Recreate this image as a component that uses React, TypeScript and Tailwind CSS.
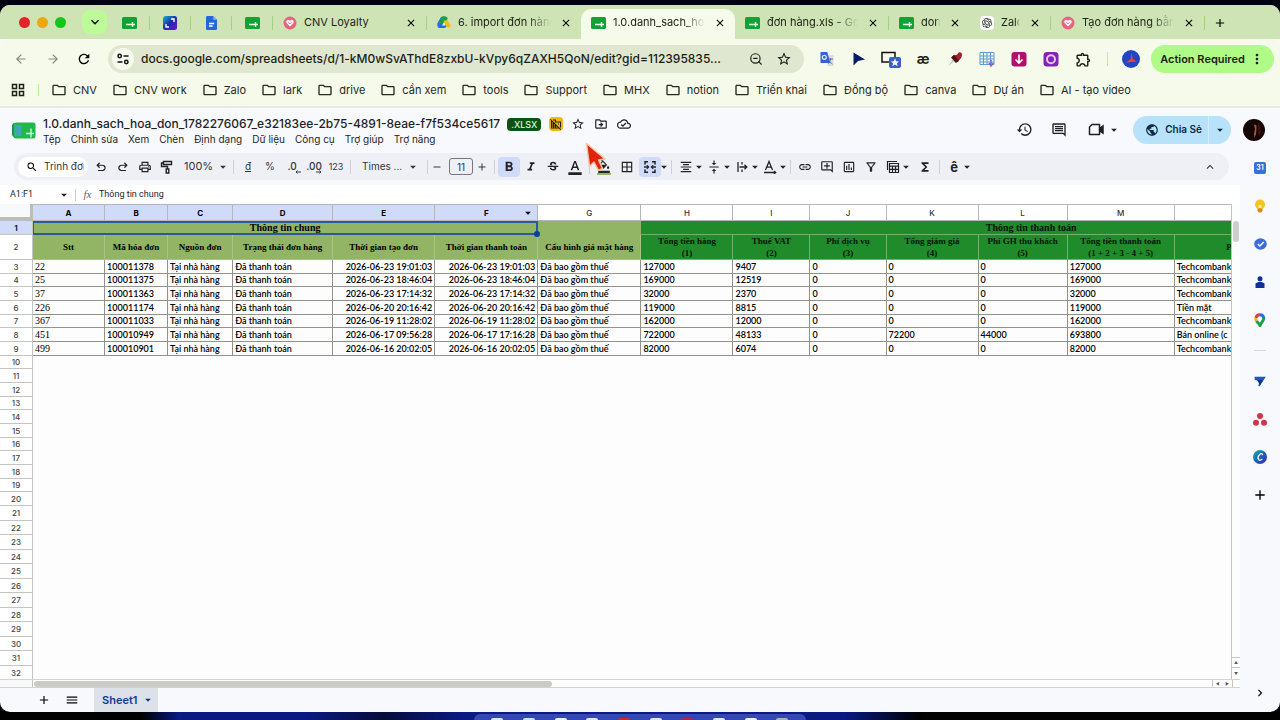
import type { ReactNode } from 'react';
import {
  MdAdd,
  MdArrowDropDown,
  MdBorderAll,
  MdClose,
  MdDomainDisabled,
  MdFormatAlignCenter,
  MdFormatBold,
  MdFormatColorFill,
  MdFormatColorText,
  MdFormatItalic,
  MdFunctions,
  MdHistory,
  MdKeyboardArrowDown,
  MdKeyboardArrowRight,
  MdKeyboardArrowUp,
  MdLink,
  MdMenu,
  MdMoreVert,
  MdOutlineAddComment,
  MdOutlineCloudDone,
  MdOutlineComment,
  MdOutlineDriveFileMove,
  MdOutlineExtension,
  MdOutlineFilterAlt,
  MdOutlineFolder,
  MdOutlineInsertChart,
  MdOutlinePrint,
  MdPublic,
  MdRefresh,
  MdRemove,
  MdSearch,
  MdStarBorder,
  MdStrikethroughS,
  MdVerticalAlignCenter,
} from 'react-icons/md';
import { ArrowLeft, ArrowRight, ZoomOut } from 'lucide-react';
import { SiOpenai } from 'react-icons/si';

const bookmarks = [
  'CNV',
  'CNV work',
  'Zalo',
  'lark',
  'drive',
  'cần xem',
  'tools',
  'Support',
  'MHX',
  'notion',
  'Triển khai',
  'Đồng bộ',
  'canva',
  'Dự án',
  'AI - tạo video',
];

const menus = ['Tệp', 'Chỉnh sửa', 'Xem', 'Chèn', 'Định dạng', 'Dữ liệu', 'Công cụ', 'Trợ giúp', 'Trợ năng'];

const columns = [
  { id: 'A', width: 72, title: 'Stt' },
  { id: 'B', width: 63, title: 'Mã hóa đơn' },
  { id: 'C', width: 65, title: 'Nguồn đơn' },
  { id: 'D', width: 100, title: 'Trạng thái đơn hàng' },
  { id: 'E', width: 102, title: 'Thời gian tạo đơn' },
  { id: 'F', width: 103, title: 'Thời gian thanh toán' },
  { id: 'G', width: 103, title: 'Cấu hình giá mặt hàng' },
  { id: 'H', width: 92, title: 'Tổng tiền hàng', note: '(1)' },
  { id: 'I', width: 77, title: 'Thuế VAT', note: '(2)' },
  { id: 'J', width: 76, title: 'Phí dịch vụ', note: '(3)' },
  { id: 'K', width: 92, title: 'Tổng giảm giá', note: '(4)' },
  { id: 'L', width: 89, title: 'Phí GH thu khách', note: '(5)' },
  { id: 'M', width: 107, title: 'Tổng tiền thanh toán', note: '(1 + 2 + 3 - 4 + 5)' },
  { id: 'N', width: 198, title: 'Phương thức thanh toán' },
  { id: 'O', width: 48, title: '' },
];

const paid = 'Đã thanh toán';
const shop = 'Tại nhà hàng';
const taxed = 'Đã bao gồm thuế';

const records = [
  ['22', '100011378', shop, paid, '2026-06-23 19:01:03', '2026-06-23 19:01:03', taxed, '127000', '9407', '0', '0', '0', '127000', 'Techcombank'],
  ['25', '100011375', shop, paid, '2026-06-23 18:46:04', '2026-06-23 18:46:04', taxed, '169000', '12519', '0', '0', '0', '169000', 'Techcombank'],
  ['37', '100011363', shop, paid, '2026-06-23 17:14:32', '2026-06-23 17:14:32', taxed, '32000', '2370', '0', '0', '0', '32000', 'Techcombank'],
  ['226', '100011174', shop, paid, '2026-06-20 20:16:42', '2026-06-20 20:16:42', taxed, '119000', '8815', '0', '0', '0', '119000', 'Tiền mặt'],
  ['367', '100011033', shop, paid, '2026-06-19 11:28:02', '2026-06-19 11:28:02', taxed, '162000', '12000', '0', '0', '0', '162000', 'Techcombank'],
  ['451', '100010949', shop, paid, '2026-06-17 09:56:28', '2026-06-17 17:16:28', taxed, '722000', '48133', '0', '72200', '44000', '693800', 'Bán online (c'],
  ['499', '100010901', shop, paid, '2026-06-16 20:02:05', '2026-06-16 20:02:05', taxed, '82000', '6074', '0', '0', '0', '82000', 'Techcombank'],
];

const heightOf = (row: number) => {
  if (row > 20) return row % 2 ? 15 : 14;
  return row % 3 === 1 ? 13 : 14;
};

const emptyRows = Array.from({ length: 23 }, (_, i) => i + 10);

const dockItems = [
  'bg-[#dfe6f5]',
  'bg-[#cfe0ff]',
  'bg-[#e8edf8]',
  'bg-[#dfe6f5]',
  'bg-[#c4282f]',
  'bg-[#dfe6f5]',
  'bg-[#ac2346]',
  'bg-[#dfe6f5]',
  'bg-[#e8edf8]',
  'bg-[#a9aeb8]',
];

const SheetsIcon = () => (
  <svg viewBox="0 0 15 12" className="h-3 w-[15px] shrink-0">
    <rect width="15" height="12" rx="1.5" fill="#0fa336" />
    <path d="M4 7.500h9M10.500 5v5" stroke="#e8ffe9" strokeWidth="1.4" />
  </svg>
);

const HeartIcon = () => (
  <svg viewBox="0 0 14 14" className="size-3.5 shrink-0">
    <circle cx="7" cy="7" r="6.5" fill="#e5657f" />
    <path d="M7 10.5 3.8 7.2a1.9 1.9 0 0 1 2.7-2.7l.5.5.5-.5a1.9 1.9 0 0 1 2.7 2.7z" fill="#fff" />
    <path d="m5.4 6.4 1.6 1.4 1.6-1.4" stroke="#e5657f" fill="none" />
  </svg>
);

const DriveIcon = () => (
  <svg viewBox="0 0 14 13" className="h-[13px] w-3.5 shrink-0">
    <path d="M5 3.200 2.300 8" stroke="#2c6be0" strokeWidth="4" strokeLinecap="round" />
    <path d="M7 3 4.500 7" stroke="#16a04a" strokeWidth="5" strokeLinecap="round" />
    <path d="m8.500 4.500 3 5" stroke="#f9bc15" strokeWidth="4" strokeLinecap="round" />
    <path d="M2.400 10h5" stroke="#2c6be0" strokeWidth="4" strokeLinecap="round" />
    <path d="M5.500 2.500h3" stroke="#16a04a" strokeWidth="4" strokeLinecap="round" />
    <path d="m7 6 2 3.500H5z" fill="#e9f3da" />
  </svg>
);

const ResizeIcon = () => (
  <svg viewBox="0 0 14 14" className="size-3.5 shrink-0">
    <defs>
      <linearGradient id="resize" x1="0" y1="0" x2="1" y2="1">
        <stop offset="0" stopColor="#19b8c9" />
        <stop offset=".5" stopColor="#1b2bb0" />
        <stop offset="1" stopColor="#7a12c9" />
      </linearGradient>
    </defs>
    <rect width="14" height="14" rx="2.5" fill="url(#resize)" />
    <path d="M8 3h3v3M6 11H3V8" stroke="#fff" strokeWidth="1.4" fill="none" />
  </svg>
);

const DocsIcon = () => (
  <svg viewBox="0 0 11 14" className="h-3.5 w-[11px] shrink-0">
    <path d="M1.300 0h6L11 3.700v9a1.300 1.300 0 0 1-1.300 1.300H1.300A1.300 1.300 0 0 1 0 12.700V1.300A1.300 1.300 0 0 1 1.300 0z" fill="#2467dc" />
    <path d="M7.300 0 11 3.700H7.300z" fill="#8db8f8" />
    <path d="M3 7.500h5.200M3 10h3.600" stroke="#fff" strokeWidth="1.300" />
  </svg>
);

const Divider = () => <span className="h-3.5 w-px shrink-0 bg-[#a3d284]" />;

const PinnedTab = ({ label, children }: { label: string; children: ReactNode }) => (
  <div className="flex h-full shrink-0 items-center pb-[3px]">
    <button type="button" aria-label={label} className="flex w-10 items-center justify-center">
      {children}
    </button>
    <Divider />
  </div>
);

type TabProps = { icon: ReactNode; title: string; size?: 'full' | 'small'; active?: boolean; divider?: boolean };

const Tab = ({ icon, title, size = 'full', active = false, divider = true }: TabProps) => (
  <div
    className={`flex h-full min-w-0 items-center pb-[3px] ${size === 'full' ? 'basis-[154px]' : 'basis-[81px]'} ${
      active ? 'rounded-t-[10px] bg-[#f5faea]' : ''
    }`}
  >
    <button type="button" className="flex h-full min-w-0 flex-1 items-center gap-[7px] pl-2.5 text-left">
      {icon}
      <span
        className={`min-w-0 flex-1 overflow-hidden whitespace-nowrap ${
          title === 'CNV Loyalty' ? '' : 'mask-r-from-75% mask-r-to-100%'
        }`}
      >
        {title}
      </span>
    </button>
    <button type="button" aria-label={`Close ${title}`} className="flex w-[30px] shrink-0 items-center justify-center text-black">
      <MdClose className="size-3" />
    </button>
    {divider && <Divider />}
  </div>
);

const TabStrip = () => (
  <div className="flex h-[34px] items-center bg-[#cfe4b5] pt-1 text-[11px] text-[#20251a]">
    <div className="-mt-1 flex items-center gap-[7px] pl-[19px]">
      <span className="size-[11px] rounded-full bg-[#e5232b]" />
      <span className="size-[11px] rounded-full bg-[#eaa90d]" />
      <span className="size-[11px] rounded-full bg-[#12c718]" />
    </div>
    <button
      type="button"
      aria-label="Search tabs"
      className="-mt-1 mr-0.5 ml-4 flex h-6 w-[25px] items-center justify-center rounded-lg bg-[#bdfb98] text-black"
    >
      <MdKeyboardArrowDown className="size-4" />
    </button>
    <div className="flex h-full min-w-0 flex-1 items-center">
      <PinnedTab label="Sheets"><SheetsIcon /></PinnedTab>
      <PinnedTab label="Resize"><ResizeIcon /></PinnedTab>
      <PinnedTab label="Docs"><DocsIcon /></PinnedTab>
      <PinnedTab label="Sheets 2"><SheetsIcon /></PinnedTab>
      <Tab icon={<HeartIcon />} title="CNV Loyalty" />
      <Tab icon={<DriveIcon />} title="6. import đơn hàng" divider={false} />
      <Tab icon={<SheetsIcon />} title="1.0.danh_sach_hoa_" active divider={false} />
      <Tab icon={<SheetsIcon />} title="đơn hàng.xls - Goog" />
      <Tab icon={<SheetsIcon />} title="don" size="small" divider={false} />
      <Tab
        icon={
          <span className="flex size-3.5 shrink-0 items-center justify-center rounded-sm bg-white">
            <SiOpenai className="size-2.5" />
          </span>
        }
        title="Zalo"
        size="small"
      />
      <Tab icon={<HeartIcon />} title="Tạo đơn hàng bằng" />
      <button type="button" aria-label="New tab" className="flex w-[30px] items-center justify-center pb-[3px] text-black">
        <MdAdd className="size-3.5" />
      </button>
    </div>
  </div>
);

const ExtButton = ({ label, children }: { label: string; children: ReactNode }) => (
  <button type="button" aria-label={label} className="flex w-8 shrink-0 items-center justify-center">
    {children}
  </button>
);

const AddressBar = () => (
  <div className="flex h-10 items-center pr-1.5 text-[#1b1f16]">
    <div className="flex w-[108px] items-center pl-3">
      <button type="button" aria-label="Back" className="flex w-8 pl-0.5 text-[#85897a]"><ArrowLeft className="size-3.5" /></button>
      <button type="button" aria-label="Forward" className="flex w-8 pl-0.5 text-[#85897a]"><ArrowRight className="size-3.5" /></button>
      <button type="button" aria-label="Reload" className="flex text-black"><MdRefresh className="size-4" /></button>
    </div>
    <div className="flex h-7 min-w-0 flex-1 items-center rounded-full bg-[#dfe7d0] pl-1">
      <button type="button" aria-label="Site information" className="flex size-[22px] shrink-0 items-center justify-center rounded-full bg-[#f7fbee]">
        <svg viewBox="0 0 12 12" className="size-3" fill="none" stroke="#111" strokeWidth="1.500">
          <circle cx="2.700" cy="3" r="1.700" />
          <path d="M6.500 3h5M.5 9h5" />
          <circle cx="9.300" cy="9" r="1.700" />
        </svg>
      </button>
      <input
        aria-label="Address"
        readOnly
        value="docs.google.com/spreadsheets/d/1-kM0wSvAThdE8zxbU-kVpy6qZAXH5QoN/edit?gid=112395835..."
        className="min-w-0 flex-1 bg-transparent pl-[7px] text-xs font-medium text-ellipsis outline-none"
      />
      <button type="button" aria-label="Zoom" className="flex w-7 justify-center"><ZoomOut className="size-3.5" /></button>
      <button type="button" aria-label="Bookmark" className="mr-1.5 flex w-7 justify-center"><MdStarBorder className="size-4" /></button>
    </div>
    <div className="flex items-center pl-[7px]">
      <ExtButton label="Translate">
        <svg viewBox="0 0 16 16" className="size-4">
          <path d="M6 4h8.500v11H9z" fill="#d9dee5" />
          <path d="M9 8h5M11.500 7v1c0 2-1 3.500-2.500 4.500M10 10c1 1.500 2 2 3.500 3" stroke="#6c7480" fill="none" />
          <path d="M1.500 1h6.800l3 11H1.500z" fill="#3262cf" />
          <circle cx="5.300" cy="6.300" r="2" fill="none" stroke="#dfeaff" strokeWidth="1.200" />
        </svg>
      </ExtButton>
      <ExtButton label="Pointer">
        <svg viewBox="0 0 12 14" className="h-3.5 w-3"><path d="M.5.5 12 7.500 5 9 .5 13.500z" fill="#0c1b66" /></svg>
      </ExtButton>
      <ExtButton label="Window bookmark">
        <svg viewBox="0 0 20 18" className="h-[18px] w-5">
          <rect x="1" y="2.500" width="13" height="9.500" fill="none" stroke="#111" strokeWidth="1.500" />
          <rect x="8" y="7" width="12" height="11" rx="2" fill="#3760cb" />
          <path d="m14 8.500 1.200 2.700 2.900.2-2.200 1.900.7 2.900-2.600-1.600-2.600 1.600.7-2.900-2.200-1.900 2.900-.2z" fill="#fff" />
        </svg>
      </ExtButton>
      <ExtButton label="Dictionary"><span className="text-sm leading-4 font-bold">æ</span></ExtButton>
      <ExtButton label="Rocket">
        <svg viewBox="0 0 16 16" className="size-4">
          <path d="M1 15 7 7l2 2z" fill="#c9c3b8" />
          <path d="M5 6c2-3.500 5-1 5.500-3 1-2.500 5-2.500 4.500 1.500-.3 3-4 6-6.500 7z" fill="#a91f2b" />
          <path d="M4 6.500 7 4l5 6-3 2z" fill="#4a1617" />
        </svg>
      </ExtButton>
      <ExtButton label="Table capture">
        <svg viewBox="0 0 16 16" className="size-4" fill="none" stroke="#5a9bd5">
          <path d="M1 1.500h14v12H1zM1 5h14M1 8h14M1 11h14M4.500 1v13M8 1v13M11.500 1v13" />
          <path d="M12 9v5m-2-2 2 3 2.500-3" stroke="#8a62c9" strokeWidth="1.500" />
        </svg>
      </ExtButton>
      <ExtButton label="Downloader">
        <svg viewBox="0 0 16 16" className="size-4">
          <rect x=".5" y="1" width="15" height="14.500" rx="3" fill="#b0106a" />
          <path d="M8 3.500v8M4.500 8.500 8 12l3.500-3.500" stroke="#fff" strokeWidth="1.600" fill="none" />
        </svg>
      </ExtButton>
      <ExtButton label="Recorder">
        <svg viewBox="0 0 16 16" className="size-4">
          <rect x=".5" y="1" width="15" height="14.500" rx="3.500" fill="#8322b5" />
          <circle cx="8" cy="8.200" r="4" fill="none" stroke="#e6c4f3" strokeWidth="2" />
        </svg>
      </ExtButton>
      <ExtButton label="Extensions"><MdOutlineExtension className="size-[17px]" /></ExtButton>
      <span className="mx-2 h-3.5 w-px bg-[#b9eda0]" />
      <button type="button" aria-label="Profile" className="mr-[11px] ml-1.5">
        <svg viewBox="0 0 18 18" className="size-[18px]">
          <circle cx="9" cy="9" r="9" fill="#2145c7" />
          <path d="m9.500 3 1.500 6 4 2.500-5 .5-6 .5 4.500-3.500z" fill="#e5413d" />
        </svg>
      </button>
      <button type="button" className="flex h-7 w-[123px] items-center justify-center gap-1 rounded-full bg-[#b0fb87] text-[11px] font-semibold">
        Action Required
        <MdMoreVert className="size-4" />
      </button>
    </div>
  </div>
);

const Bookmarks = () => (
  <nav aria-label="Bookmarks" className="flex h-[29px] items-center border-b-2 border-[#e6ebd9] pb-[5px] pl-[11px] text-[11px] text-[#24281d]">
    <button type="button" aria-label="All apps" className="mr-[13px] flex">
      <svg viewBox="0 0 14 14" className="size-3.5" fill="none" stroke="#1d2116" strokeWidth="1.500">
        <path d="M1.500 1.500h4v4h-4zM8.500 1.500h4v4h-4zM1.500 8.500h4v4h-4zM8.500 8.500h4v4h-4z" />
      </svg>
    </button>
    <span className="mr-3 h-3 w-px bg-[#b9eda0]" />
    <div className="flex min-w-0 gap-[15px] overflow-hidden whitespace-nowrap">
      {bookmarks.map((name) => (
        <a key={name} href="#" className="flex items-center gap-1.5">
          <MdOutlineFolder className="size-4" />
          {name}
        </a>
      ))}
    </div>
  </nav>
);

const DocHeader = () => (
  <header className="flex h-[45px] items-center pl-3 text-[#1f1f1f]">
    <a href="#" aria-label="Sheets home" className="shrink-0">
      <svg viewBox="0 0 24 17" className="h-[17px] w-6">
        <rect x="0" y="1" width="9" height="14" rx="3" fill="#178a43" />
        <rect x="1.500" y=".5" width="22" height="16" rx="2.500" fill="#1fb94a" />
        <path d="M2.500 3h7v11h-7z" fill="#4aa0d8" opacity=".75" />
        <path d="M14 11.500h8M19 6.500v9" stroke="#d8ffe0" strokeWidth="1.300" />
      </svg>
    </a>
    <div className="min-w-0 flex-1 pt-0.5 pl-[7px]">
      <div className="flex items-center">
        <h1 className="truncate text-xs leading-4 font-medium">
          1.0.danh_sach_hoa_don_1782276067_e32183ee-2b75-4891-8eae-f7f534ce5617
        </h1>
        <span className="ml-[7px] rounded-sm bg-[#0b5312] px-1 text-[9px] leading-[13px] font-medium text-[#dff5dd]">.XLSX</span>
        <button type="button" aria-label="External" className="ml-2 flex size-3.5 items-center justify-center rounded-sm bg-[#f2b60f]"><MdDomainDisabled className="size-3" /></button>
        <button type="button" aria-label="Star" className="flex w-[30px] justify-center"><MdStarBorder className="size-3.5" /></button>
        <button type="button" aria-label="Move" className="flex w-4 justify-center"><MdOutlineDriveFileMove className="size-3.5" /></button>
        <button type="button" aria-label="Saved to Drive" className="flex w-[30px] justify-center"><MdOutlineCloudDone className="size-3.5" /></button>
      </div>
      <nav className="flex gap-2.5 text-[10px] leading-[15px] whitespace-nowrap">
        {menus.map((menu) => (
          <button type="button" key={menu}>{menu}</button>
        ))}
      </nav>
    </div>
    <div className="flex shrink-0 items-center pr-[15px] pb-0.5">
      <button type="button" aria-label="History" className="mr-[18px]"><MdHistory className="size-[17px]" /></button>
      <button type="button" aria-label="Comments" className="mr-[21px]"><MdOutlineComment className="size-4" /></button>
      <button type="button" aria-label="Meet" className="mr-3 flex items-center gap-0.5">
        <svg viewBox="0 0 17 13" className="h-[13px] w-[17px]" fill="none" stroke="#1f1f1f" strokeWidth="1.500">
          <path d="M4 1.500h7.500v10H1.500V4z" strokeLinejoin="round" />
          <path d="m12 5 3-2v7l-3-2z" fill="#1f1f1f" />
        </svg>
        <MdArrowDropDown className="size-3.5" />
      </button>
      <div className="flex h-7 items-center rounded-full bg-[#b8e1fa] text-[10px] font-semibold text-[#0b2a45]">
        <button type="button" className="flex h-full items-center gap-1.5 pr-1.5 pl-3"><MdPublic className="size-3.5" />Chia Sẻ</button>
        <button type="button" aria-label="Share options" className="flex h-full w-[23px] items-center justify-center border-l border-[#d5eefc]"><MdArrowDropDown className="size-3.5" /></button>
      </div>
      <button type="button" aria-label="Account" className="ml-3">
        <svg viewBox="0 0 22 22" className="size-[22px]">
          <circle cx="11" cy="11" r="11" fill="#150606" />
          <path d="M11 6c2-1 3 1 2.500 3.500L13 15l-1.500 4-.5-4 1-5z" fill="#a65a3c" />
          <path d="M15 4c3 3 4 9 1 14-1-5-1-9-1-14z" fill="#4a0c0c" />
        </svg>
      </button>
    </div>
  </header>
);

const ToolButton = ({ label, pressed = false, children }: { label: string; pressed?: boolean; children: ReactNode }) => (
  <button
    type="button"
    aria-label={label}
    className={`flex h-5 w-[22px] shrink-0 items-center justify-center rounded-sm ${pressed ? 'bg-[#cfdbf8]' : ''}`}
  >
    {children}
  </button>
);

const Caret = () => <MdArrowDropDown className="-mr-[3px] -ml-[5px] size-3.5 shrink-0" />;
const ToolDivider = () => <span className="mx-[3px] h-3.5 w-px shrink-0 bg-[#cdd0d6]" />;

const Toolbar = () => (
  <div role="toolbar" className="mx-[11px] ml-3.5 flex h-[27px] shrink-0 items-center overflow-hidden rounded-full bg-[#eef0f6] pl-1 text-[10px] text-[#33363a]">
    <label className="flex h-5 w-[70px] shrink-0 items-center rounded-full bg-white pl-2">
      <MdSearch className="size-3 shrink-0 text-black" />
      <input aria-label="Menus" readOnly value="Trình đơn" className="ml-1.5 w-10 bg-transparent outline-none" />
    </label>
    <div className="flex pl-0.5 text-[#222]">
      <ToolButton label="Undo">
        <svg viewBox="0 -960 960 960" className="size-3.5" fill="currentColor"><path d="M280-200v-80h284q63 0 109.500-40T720-420q0-60-46.500-100T564-560H312l104 104-56 56-200-200 200-200 56 56-104 104h252q97 0 169.500 63T800-420q0 94-72.500 157T564-200H280Z" /></svg>
      </ToolButton>
      <ToolButton label="Redo">
        <svg viewBox="0 -960 960 960" className="size-3.5" fill="currentColor"><path d="M396-200q-97 0-169.500-63T154-420q0-94 72.500-157T396-640h252L544-744l56-56 200 200-200 200-56-56 104-104H396q-63 0-109.500 40T240-420q0 60 46.500 100T396-280h284v80H396Z" /></svg>
      </ToolButton>
      <ToolButton label="Print"><MdOutlinePrint className="size-3.5" /></ToolButton>
      <ToolButton label="Paint format">
        <svg viewBox="0 0 14 14" className="size-3.5" fill="none" stroke="currentColor" strokeWidth="1.400">
          <path d="M3.500 1.500h8v3h-8zM3.500 3h-2v3.500h6V9M6.200 9h2.600v4H6.200z" />
        </svg>
      </ToolButton>
    </div>
    <div className="flex items-center pl-1.5">
      <select aria-label="Zoom" className="w-8 appearance-none bg-transparent text-[11px] outline-none">
        <option>100%</option>
      </select>
      <MdArrowDropDown className="size-3.5 shrink-0" />
    </div>
    <ToolDivider />
    <div className="flex">
      <ToolButton label="Currency"><span className="underline">đ</span></ToolButton>
      <ToolButton label="Percent">%</ToolButton>
      <ToolButton label="Fewer decimals">
        <span className="relative font-medium">.0
          <svg viewBox="0 0 6 4" className="absolute -right-1 bottom-0 h-1 w-1.5" fill="none" stroke="currentColor"><path d="M6 2H1M2.500.5 1 2l1.500 1.500" /></svg>
        </span>
      </ToolButton>
      <ToolButton label="More decimals">
        <span className="relative font-medium">.00
          <svg viewBox="0 0 6 4" className="absolute right-0 bottom-0 h-1 w-1.5" fill="none" stroke="currentColor"><path d="M0 2h5M3.500.5 5 2 3.500 3.500" /></svg>
        </span>
      </ToolButton>
      <ToolButton label="More formats"><span className="text-[9px]">123</span></ToolButton>
    </div>
    <ToolDivider />
    <div className="flex items-center pl-2">
      <select aria-label="Font" className="w-11 appearance-none bg-transparent text-[10px] outline-none">
        <option>Times ...</option>
      </select>
      <MdArrowDropDown className="mr-1 size-3.5 shrink-0" />
    </div>
    <ToolDivider />
    <button type="button" aria-label="Smaller" className="flex w-[18px] shrink-0 items-center"><MdRemove className="size-3" /></button>
    <input aria-label="Font size" readOnly value="11" className="h-[17px] w-6 shrink-0 rounded-[3px] border border-[#74777c] text-center outline-none" />
    <button type="button" aria-label="Larger" className="flex w-[18px] shrink-0 items-center justify-center"><MdAdd className="size-3" /></button>
    <ToolDivider />
    <div className="flex text-[#222]">
      <ToolButton label="Bold" pressed><MdFormatBold className="size-4" /></ToolButton>
      <ToolButton label="Italic"><MdFormatItalic className="size-3.5" /></ToolButton>
      <ToolButton label="Strikethrough"><MdStrikethroughS className="size-3.5" /></ToolButton>
      <ToolButton label="Text colour"><MdFormatColorText className="size-4" /></ToolButton>
    </div>
    <ToolDivider />
    <div className="flex gap-px text-[#222]">
      <ToolButton label="Fill colour">
        <span className="flex flex-col items-center border-b-2 border-[#93b765]"><MdFormatColorFill className="size-3.5" /></span>
      </ToolButton>
      <ToolButton label="Borders"><MdBorderAll className="size-3.5" /></ToolButton>
      <div className="flex items-center">
        <ToolButton label="Merge cells" pressed>
          <svg viewBox="0 0 14 14" className="size-3.5" fill="none" stroke="currentColor" strokeWidth="1.500">
            <path d="M5 1.800H2v2.700M9 1.800h3v2.700M5 12.200H2V9.500M9 12.200h3V9.500M1 7h4.500M13 7H8.500" />
            <path d="M3.800 5.200 5.600 7 3.800 8.800M10.200 5.200 8.400 7l1.800 1.800" strokeWidth="1.100" />
          </svg>
        </ToolButton>
        <MdArrowDropDown className="-mr-[3px] -ml-1 size-3.5 shrink-0" />
      </div>
    </div>
    <ToolDivider />
    <div className="flex items-center text-[#222]">
      <ToolButton label="Horizontal align"><MdFormatAlignCenter className="size-3.5" /></ToolButton><Caret />
      <ToolButton label="Vertical align"><MdVerticalAlignCenter className="size-3.5" /></ToolButton><Caret />
      <ToolButton label="Text wrapping">
        <svg viewBox="0 0 12 12" className="size-3" fill="none" stroke="currentColor" strokeWidth="1.300"><path d="M2 1v10M6 1v2.500M6 8.500V11M3.500 6h7M8.500 3.800 10.800 6 8.500 8.200" /></svg>
      </ToolButton><Caret />
      <ToolButton label="Text rotation">
        <svg viewBox="0 0 14 14" className="size-3.5" fill="none" stroke="currentColor" strokeWidth="1.300"><path d="M2.500 10 6 1.500 9.500 10M3.800 7.200h4.500M1 12.500h11.500M11 11l1.700 1.500L11 14" /></svg>
      </ToolButton><Caret />
    </div>
    <ToolDivider />
    <div className="flex items-center text-[#222]">
      <ToolButton label="Link"><MdLink className="size-3.5" /></ToolButton>
      <ToolButton label="Comment"><MdOutlineAddComment className="size-3.5" /></ToolButton>
      <ToolButton label="Chart"><MdOutlineInsertChart className="size-3.5" /></ToolButton>
      <ToolButton label="Filter"><MdOutlineFilterAlt className="size-3.5" /></ToolButton>
      <ToolButton label="Table views">
        <svg viewBox="0 0 14 14" className="size-3.5" fill="none" stroke="currentColor" strokeWidth="1.200"><path d="M1.500 10V1.500h9.500M3.500 3.500h9v9h-9zM3.500 6.200h9M3.500 9.300h9M6.500 6v6.500M9.500 6v6.500" /></svg>
      </ToolButton><Caret />
      <span className="w-1" />
      <ToolButton label="Functions"><MdFunctions className="size-3.5" /></ToolButton>
    </div>
    <ToolDivider />
    <div className="flex items-center text-[#222]">
      <ToolButton label="Input tools"><span className="text-[13px] leading-3 font-bold">ê</span></ToolButton><Caret />
    </div>
    <button type="button" aria-label="Hide menus" className="mr-3 ml-auto"><MdKeyboardArrowUp className="size-3.5" /></button>
  </div>
);

const FormulaBar = () => (
  <div className="mt-[5px] flex h-[19px] shrink-0 items-center bg-white font-[Roboto] text-[9px] text-[#1f1f1f]">
    <label className="flex w-[75px] items-center pl-2.5">
      <input aria-label="Name box" readOnly value="A1:F1" className="w-[47px] bg-transparent outline-none" />
      <MdArrowDropDown className="size-3.5" />
    </label>
    <span className="h-3 w-px bg-[#c9ccd1]" />
    <span className="w-[23px] text-center font-[Liberation_Serif] text-[11px] italic text-[#5f6368]">fx</span>
    <input aria-label="Formula" readOnly value="Thông tin chung" className="flex-1 bg-transparent outline-none" />
  </div>
);

const RowHeader = ({ row, height, active = false }: { row: number; height: number; active?: boolean }) => (
  <th
    scope="row"
    style={{ height }}
    className={`border-r border-b border-[#c4c4c0] p-0 font-[Inter] text-[8px] leading-3 ${
      active ? 'bg-[#cfdbf8] font-bold text-[#0a1a4a]' : 'bg-white font-medium text-[#444]'
    }`}
  >
    {row}
  </th>
);

const Grid = () => (
  <table className="w-[1421px] table-fixed border-separate border-spacing-0 text-black">
    <colgroup>
      <col className="w-[33px]" />
      {columns.map((column) => (
        <col key={column.id} style={{ width: column.width }} />
      ))}
    </colgroup>
    <thead>
      <tr>
        <th className="h-[17px] border-r-3 border-b-4 border-[#bdbdb8] bg-[#f8f9fa] p-0" />
        {columns.map((column, i) => (
          <th
            key={column.id}
            scope="col"
            className={`h-[17px] border-t border-r border-b border-[#b4b6ba] p-0 font-[Inter] text-[8px] leading-3 ${
              i < 6 ? 'bg-[#cfdbf8] font-bold' : 'bg-white font-medium text-[#333]'
            }`}
          >
            {column.id === 'F' ? (
              <span className="flex items-center">
                <span className="flex-1 pl-4">F</span>
                <MdArrowDropDown className="mr-0.5 size-3.5" />
              </span>
            ) : i < 13 ? (
              column.id
            ) : null}
          </th>
        ))}
      </tr>
    </thead>
    <tbody>
      <tr className="font-[Liberation_Serif] text-[10px] leading-3 font-bold">
        <RowHeader row={1} height={14} active />
        <td colSpan={6} className="relative h-3.5 border border-t-2 border-r-2 border-b-2 border-[#285a9c] bg-[#91b564] p-0 text-center leading-[10px]">
          Thông tin chung
          <span className="absolute -right-1 -bottom-1 size-1.5 rounded-full bg-[#0d3caa]" />
        </td>
        <td className="bg-[#91b564] p-0" />
        <td colSpan={8} className="border-b border-[#6cb374] bg-[#1f8b2b] p-0 text-center text-[#031506]">
          Thông tin thanh toán
        </td>
      </tr>
      <tr className="font-[Liberation_Serif] text-[9px] leading-3 font-bold whitespace-nowrap">
        <RowHeader row={2} height={25} />
        {columns.map((column, i) => (
          <td
            key={column.id}
            className={`border-r border-b p-0 text-center ${
              i < 7 ? 'border-[#a9c585] bg-[#91b564]' : 'border-[#6cb374] bg-[#1f8b2b] text-[#031506]'
            }`}
          >
            {column.title}
            {column.note && <div>{column.note}</div>}
          </td>
        ))}
      </tr>
      {records.map((record, i) => (
        <tr key={record[0]} className="font-[Lato] text-[9px] leading-3 font-semibold whitespace-nowrap">
          <RowHeader row={i + 3} height={heightOf(i + 3)} />
          {record.map((value, c) => (
            <td
              key={columns[c].id}
              className={`overflow-hidden border-r border-b border-[#94918a] px-0.5 py-0 ${
                c === 4 || c === 5 ? 'text-right' : ''
              } ${c === 0 ? 'font-[Liberation_Serif] text-[10px] font-normal' : ''}`}
            >
              {value}
            </td>
          ))}
          <td className="border-b border-[#94918a] p-0" />
        </tr>
      ))}
      {emptyRows.map((row) => (
        <tr key={row}>
          <RowHeader row={row} height={heightOf(row)} />
          <td colSpan={15} className="p-0" />
        </tr>
      ))}
    </tbody>
  </table>
);

const Scrollbars = () => (
  <div className="flex h-[9px] shrink-0 items-center border-t border-b border-[#d4d3cf] bg-white text-[#555]">
    <span className="h-full w-[33px] border-r border-[#c4c4c0] bg-[#f8f9fa]" />
    <div className="flex-1 pl-px">
      <div className="h-1.5 w-[44%] rounded-full bg-[#cbcac5]" />
    </div>
    <button type="button" aria-label="Scroll left" className="w-2.5 border-l border-[#c4c4c0] text-center text-[4px] leading-[7px]">◀</button>
    <button type="button" aria-label="Scroll right" className="w-2.5 text-center text-[4px] leading-[7px]">▶</button>
    <span className="h-full w-2 border-l border-[#c4c4c0]" />
  </div>
);

const SheetTabs = () => (
  <div className="flex h-6 shrink-0 items-center pl-[37px]">
    <button type="button" aria-label="Add sheet" className="flex w-7"><MdAdd className="size-3.5" /></button>
    <button type="button" aria-label="All sheets" className="flex w-[29px]"><MdMenu className="size-3.5" /></button>
    <button type="button" className="flex h-full items-center gap-1 bg-[#dde1ea] pr-[3px] pl-2 text-[11px] font-semibold text-[#123a8f]">
      Sheet1
      <MdArrowDropDown className="size-3.5" />
    </button>
  </div>
);

const SideButton = ({ label, children }: { label: string; children: ReactNode }) => (
  <button type="button" aria-label={label} className="flex size-4 shrink-0 items-center justify-center">
    {children}
  </button>
);

const SidePanel = () => (
  <aside className="flex w-10 shrink-0 flex-col items-center gap-[22px] pt-[7px]">
    <SideButton label="Calendar">
      <span className="flex size-3 items-center justify-center rounded-xs bg-[#3a6fd8] text-[7px] font-semibold text-white">31</span>
    </SideButton>
    <SideButton label="Keep">
      <svg viewBox="0 0 12 14" className="h-3.5 w-3"><circle cx="6" cy="5.500" r="5" fill="#f6c51c" /><path d="M3.500 9.500h5V12L7 13.500H5L3.500 12z" fill="#d8861a" /><path d="M4.500 6h3v3h-3z" fill="#fff0a8" /></svg>
    </SideButton>
    <SideButton label="Tasks">
      <svg viewBox="0 0 13 12" className="h-3 w-[13px]"><ellipse cx="6.500" cy="6" rx="6.300" ry="5.800" fill="#3d6bdc" /><path d="m3.800 6 2 2 4-4" stroke="#fff" strokeWidth="1.500" fill="none" /></svg>
    </SideButton>
    <SideButton label="Contacts">
      <svg viewBox="0 0 10 12" className="h-3 w-2.5" fill="#10309c"><circle cx="5" cy="2.800" r="2.500" /><path d="M.5 7.500Q5 4 9.500 7.500V12h-9z" /></svg>
    </SideButton>
    <SideButton label="Maps">
      <svg viewBox="0 0 12 14" className="h-3.5 w-3" fill="none" strokeWidth="3">
        <path d="M2.500 8A4 4 0 0 1 2 4.500" stroke="#f2b51d" />
        <path d="M2 4.800A4 4 0 0 1 6 1.800" stroke="#e2403a" />
        <path d="M5.800 1.800a4 4 0 0 1 4 3.500" stroke="#2d6ce0" />
        <path d="M9.900 5c0 2.500-2.500 4-3.900 7.500C5 10.500 3.500 9.500 2.600 8" stroke="#1ca04a" />
      </svg>
    </SideButton>
    <span className="h-px w-3 shrink-0 bg-[#d9dbdf]" />
    <SideButton label="Add-on">
      <svg viewBox="0 0 12 11" className="h-[11px] w-3"><path d="M.5.800h11.300L5.500 10.500 4.200 9.800 5.800 5 .8 4z" fill="#2355c8" /><path d="M3 4h6L6 9z" fill="#17327f" /></svg>
    </SideButton>
    <SideButton label="Asana">
      <svg viewBox="0 0 14 13" className="h-[13px] w-3.5" fill="#cf3548"><circle cx="7" cy="3" r="3" /><circle cx="3" cy="9.700" r="3" /><circle cx="11" cy="9.700" r="3" /></svg>
    </SideButton>
    <SideButton label="Canva">
      <svg viewBox="0 0 14 14" className="size-3.5">
        <defs>
          <linearGradient id="canva" x1="0" y1="0" x2="1" y2="1"><stop offset="0" stopColor="#15b7b5" /><stop offset=".5" stopColor="#1764b8" /><stop offset="1" stopColor="#4a1fb0" /></linearGradient>
        </defs>
        <circle cx="7" cy="7" r="7" fill="url(#canva)" />
        <path d="M9.500 5.200c.3-2-1.500-2-2.600-1C5.300 5.700 4.700 8 5.500 9.500c.8 1.200 2.700.8 3.700-.7" stroke="#fff" strokeWidth="1.200" fill="none" />
      </svg>
    </SideButton>
    <SideButton label="Get add-ons"><MdAdd className="size-4" /></SideButton>
    <button type="button" aria-label="Hide side panel" className="mt-auto mb-3"><MdKeyboardArrowRight className="size-3.5" /></button>
  </aside>
);

export default function App() {
  return (
    <div className="relative flex h-screen flex-col overflow-hidden bg-[#02030d] font-[Inter,sans-serif]">
      <div className="h-[5px] shrink-0" />
      <div className="flex min-h-0 flex-1 flex-col overflow-hidden rounded-[10px] bg-[#f7f9fc]">
        <TabStrip />
        <div className="rounded-t-lg bg-[#f5faea]">
          <AddressBar />
          <Bookmarks />
        </div>
        <DocHeader />
        <div className="flex min-h-0 flex-1">
          <main className="flex min-w-0 flex-1 flex-col">
            <Toolbar />
            <FormulaBar />
            <div className="flex min-h-0 flex-1 bg-[#fdfdfd]">
              <div className="min-w-0 flex-1 overflow-hidden border-r border-[#c4c4c0]">
                <Grid />
              </div>
              <div className="flex w-2 shrink-0 flex-col pt-[17px] text-center text-[4px] text-[#555]">
                <span className="mx-px h-[21px] rounded-full bg-[#cfcfcc]" />
                <button type="button" aria-label="Scroll up" className="mt-auto h-[11px] border-t border-b border-[#c4c4c0] leading-[9px]">▲</button>
                <button type="button" aria-label="Scroll down" className="h-[11px] leading-[11px]">▼</button>
              </div>
            </div>
            <Scrollbars />
            <SheetTabs />
          </main>
          <SidePanel />
        </div>
      </div>
      <div className="flex h-2 shrink-0 justify-center bg-[linear-gradient(to_right,#000_11%,#0a1a80_14%,#0a1a80_24%,#050c3a_30%,#0a1a80_36%,#0a1a80_66%,#000_72%)] pt-0.5">
        <div className="flex w-[26%] items-end justify-around overflow-hidden rounded-t-md bg-[#3347b5] px-2">
          {dockItems.map((color, i) => (
            <span key={i} className={`h-0.5 w-3 rounded-t-sm ${color}`} />
          ))}
        </div>
      </div>
      <svg viewBox="0 0 22 32" className="absolute top-[142px] left-[585px] h-8 w-[22px]">
        <path d="M1.500 1.500 20 17l-6.500 1 4 8.500-4 2-4.500-8.500-4.500 4.500z" fill="#e3220f" stroke="#f3c79a" strokeWidth="1.500" strokeLinejoin="round" />
      </svg>
    </div>
  );
}
